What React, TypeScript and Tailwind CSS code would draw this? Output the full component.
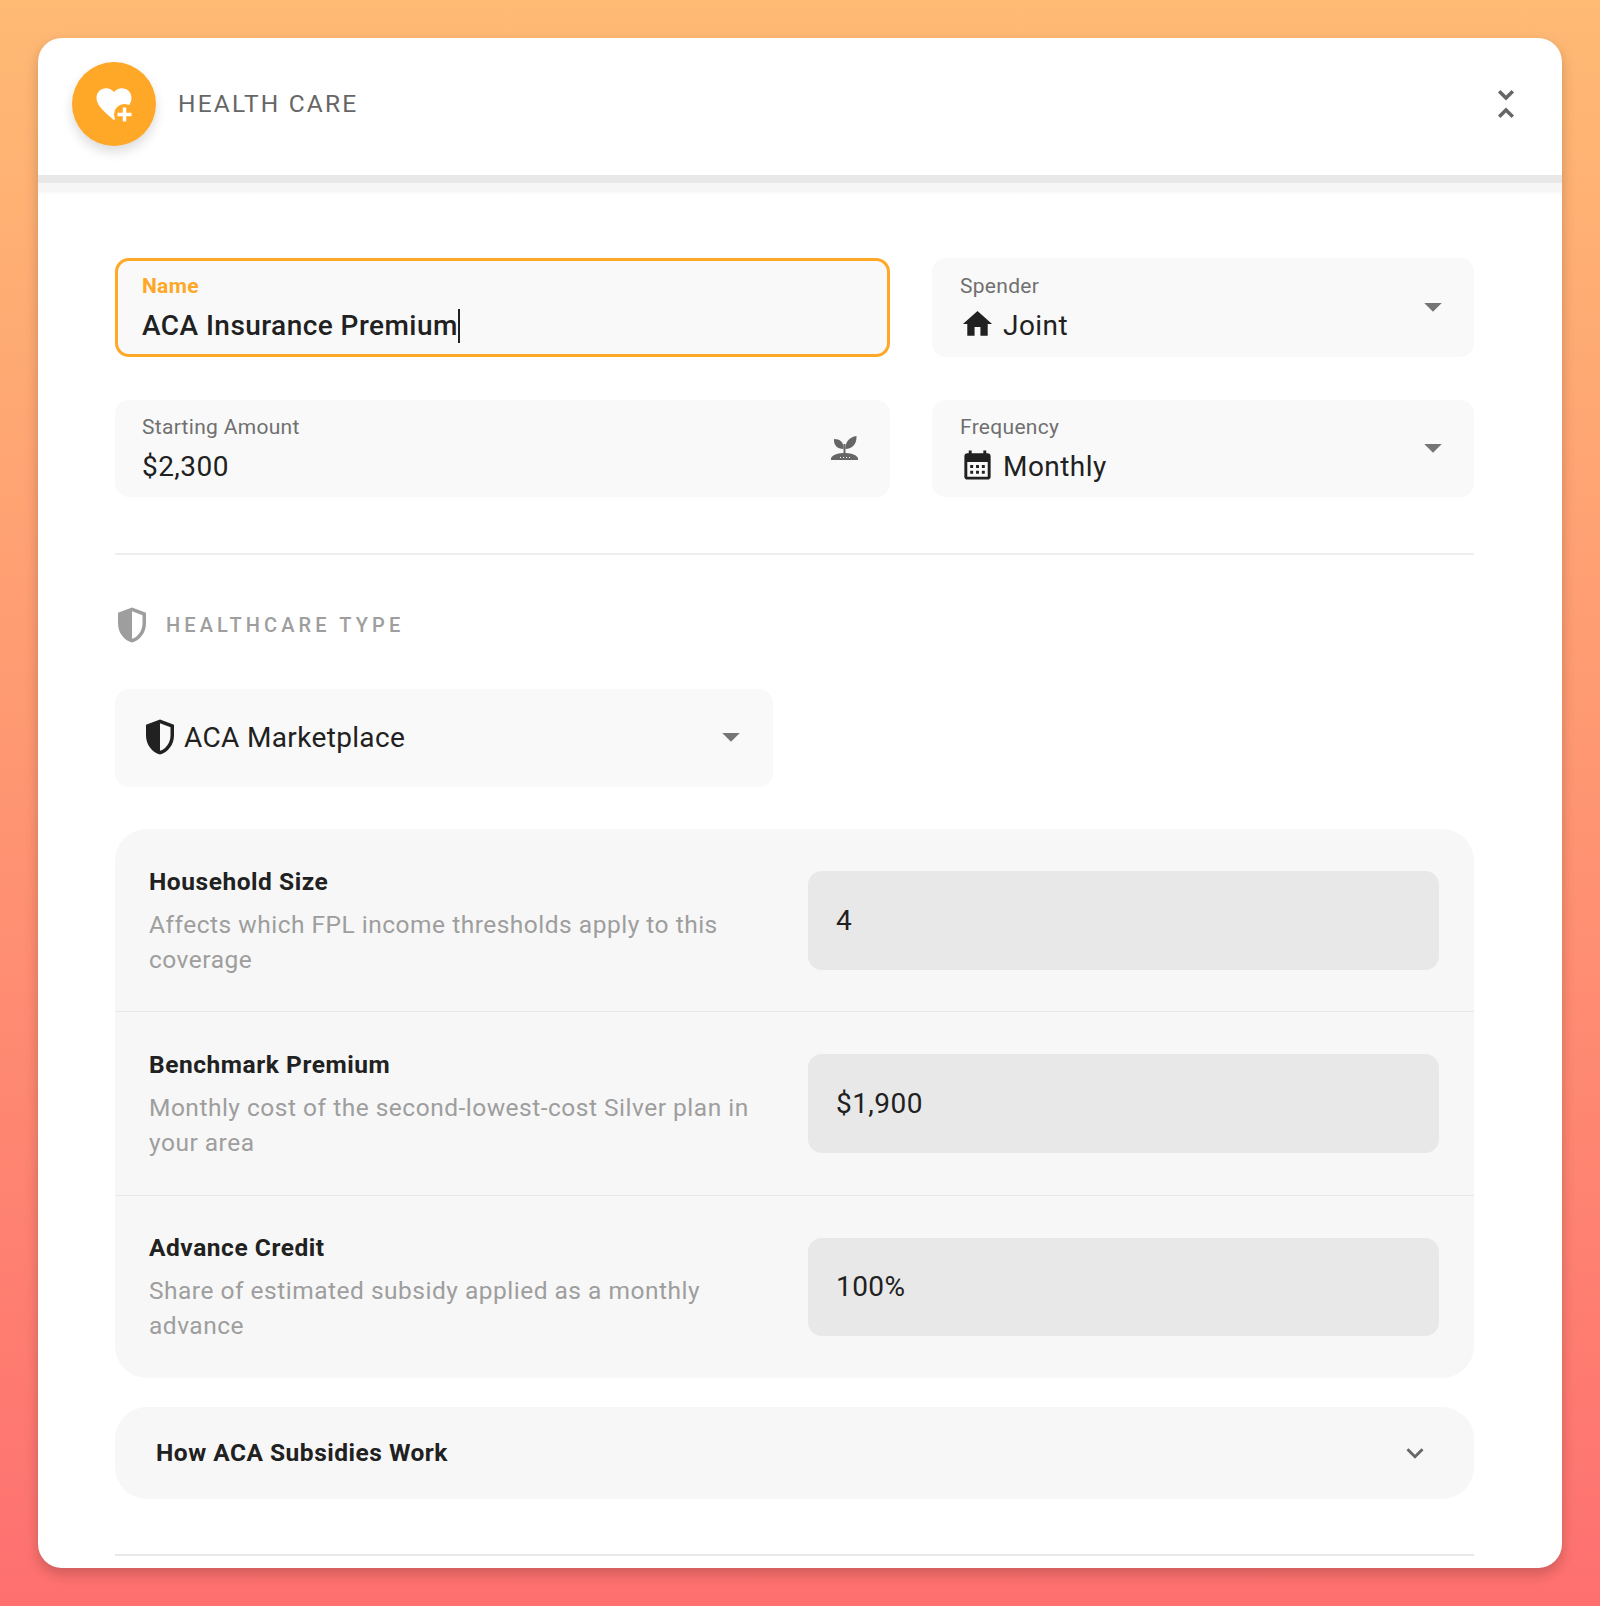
const caret = (
  <svg viewBox="0 0 24 24" className="w-[42px] h-[42px] fill-[#757575] shrink-0 -translate-y-[1.500px]">
    <path d="M7 10l5 5 5-5z" />
  </svg>
);

function HeartPlus() {
  return (
    <svg viewBox="0 0 24 24" className="w-[42px] h-[42px]">
      <path
        fill="#fff"
        d="M12 21.35l-1.45-1.32C5.4 15.36 2 12.28 2 8.5 2 5.42 4.42 3 7.5 3c1.74 0 3.41.81 4.5 2.09C13.09 3.81 14.76 3 16.5 3 19.58 3 22 5.42 22 8.5c0 3.78-3.4 6.86-8.55 11.54L12 21.35z"
      />
      <circle cx="18" cy="18" r="6" fill="#ffa726" />
      <path fill="#fff" d="M17 14h2v3h3v2h-3v3h-2v-3h-3v-2h3z" />
    </svg>
  );
}

function HalfShield({ className }: { className: string }) {
  return (
    <svg viewBox="0 0 24 24" className={className}>
      <path d="M12 2 4 5v6.09c0 5.05 3.41 9.76 8 10.91 4.59-1.15 8-5.86 8-10.91V5l-8-3zm6 9.09c0 4-2.55 7.7-6 8.83V4.14l6 2.25v4.7z" />
    </svg>
  );
}

function Sprout() {
  return (
    <svg viewBox="0 0 27 24" className="w-[27px] h-[24px] fill-[#666666] shrink-0">
      <path d="M0 22c2-4 9-5 13.500-5S25 18 27 22v2H0z" />
      <path d="M12.500 13C6 13 2.500 9 3 3c6 0 10 3 9.500 10z" />
      <path d="M14.500 13C21 13 26 8 25.500 0 18.500 1 14 6 14.500 13z" />
      <path d="M12.500 8h2v10h-2z" />
      <path fill="#f9f9f9" d="M9 21h1v1H9zm3 0h1v1h-1zm3 0h1v1h-1zm3 0h1v1h-1z" />
    </svg>
  );
}

function FilledField({
  label,
  value,
  icon,
  end,
  className,
}: {
  label: string;
  value: string;
  icon?: React.ReactNode;
  end?: React.ReactNode;
  className: string;
}) {
  return (
    <div className={`${className} rounded-[14px] bg-[#f9f9f9] flex items-center pr-[20px]`}>
      <div className="flex-1 pt-[1px]">
        <div className="text-[21px] leading-[28px] tracking-[0.3px] text-[#707070]">{label}</div>
        <div className="mt-[8px] flex items-center gap-[8px] text-[28px] leading-[36px] tracking-[0.45px] text-[#212121]">
          {icon}
          <span>{value}</span>
        </div>
      </div>
      {end}
    </div>
  );
}

function SettingRow({ title, desc, value, last }: { title: string; desc: string; value: string; last?: boolean }) {
  return (
    <div className={`grid grid-cols-2 gap-[28px] items-center pl-[34px] pr-[35px] py-[41.800px] ${last ? '' : 'border-b border-[#e8e8e8]'}`}>
      <div className="-my-[8px]">
        <div className="text-[24.500px] leading-[35px] font-bold tracking-[0.55px] text-[#212121]">{title}</div>
        <div className="mt-[8px] text-[24.500px] leading-[35px] text-[#9e9e9e] tracking-[0.5px]">{desc}</div>
      </div>
      <div className="h-[98.800px] rounded-[14px] bg-[#e8e8e8] flex items-center px-[28px] pt-[1px] text-[28px] tracking-[0.45px] text-[#212121]">
        {value}
      </div>
    </div>
  );
}

export default function App() {
  return (
    <div className="min-h-[1606px] p-[38px] bg-[linear-gradient(180deg,#ffba74_0%,#fe7070_100%)] font-[family-name:Roboto,sans-serif]">
      <div className="h-[1530px] overflow-hidden rounded-[24px] bg-white shadow-[0_6px_14px_rgba(0,0,0,0.2)]">
        {/* Header */}
        <header className="h-[137px] flex items-center justify-between pl-[34px] pr-[35px]">
          <div className="flex items-center gap-[22px]">
            <div className="w-[84px] h-[84px] -mt-[5px] rounded-full bg-[#ffa726] flex items-center justify-center shadow-[0_6px_12px_rgba(0,0,0,0.14)]">
              <HeartPlus />
            </div>
            <span className="-mt-[5px] text-[24.500px] tracking-[2.170px] text-[#666666]">HEALTH CARE</span>
          </div>
          <svg viewBox="0 0 24 24" className="w-[42px] h-[42px] -mt-[6px] fill-[#666666]">
            <path d="M7.410 18.590 8.830 20 12 16.830 15.170 20l1.410-1.410L12 14l-4.590 4.590zm9.180-13.180L15.170 4 12 7.170 8.830 4 7.410 5.410 12 10l4.590-4.590z" />
          </svg>
        </header>
        <div className="h-[20px] bg-[linear-gradient(180deg,#e8e8e8_0%,#e8e8e8_38%,#f6f6f6_42%,#f6f6f6_80%,#ffffff_100%)]" />

        <div className="pl-[77px] pr-[88px] pt-[63px]">
          {/* Base fields */}
          <div className="flex gap-[42px]">
            <div className="w-[775px] h-[99px] rounded-[14px] border-[3px] border-[#ffa726] bg-[#f9f9f9] pl-[24px] pt-[1px] flex flex-col justify-center">
              <div className="text-[21px] leading-[28px] font-bold tracking-[0.3px] text-[#ffa726]">Name</div>
              <div className="mt-[8px] flex items-center text-[28px] leading-[36px] font-medium tracking-[0.45px] text-[#212121]">
                <span>ACA Insurance Premium</span>
                <span className="w-[2px] h-[34px] bg-[#212121]" />
              </div>
            </div>
            <FilledField
              className="w-[542px] h-[99px] pl-[28px]"
              label="Spender"
              value="Joint"
              icon={
                <svg viewBox="0 0 24 24" className="w-[35px] h-[35px] fill-[#212121] -translate-y-[2.500px]">
                  <path d="M10 20v-6h4v6h5v-8h3L12 3 2 12h3v8z" />
                </svg>
              }
              end={caret}
            />
          </div>
          <div className="flex gap-[42px] mt-[43px]">
            <FilledField
              className="w-[775px] h-[97px] pl-[27px]"
              label="Starting Amount"
              value="$2,300"
              end={<div className="mr-[12px] -mt-[2px]"><Sprout /></div>}
            />
            <FilledField
              className="w-[542px] h-[97px] pl-[28px]"
              label="Frequency"
              value="Monthly"
              icon={
                <svg viewBox="0 0 24 24" className="w-[35px] h-[35px] fill-[#212121] -translate-y-[2.500px]">
                  <path d="M19 4h-1V2h-2v2H8V2H6v2H5c-1.100 0-2 .9-2 2v14c0 1.100.9 2 2 2h14c1.100 0 2-.9 2-2V6c0-1.100-.9-2-2-2zm0 16H5V10h14v10zM9 14H7v-2h2v2zm4 0h-2v-2h2v2zm4 0h-2v-2h2v2zm-8 4H7v-2h2v2zm4 0h-2v-2h2v2zm4 0h-2v-2h2v2z" />
                </svg>
              }
              end={caret}
            />
          </div>

          <div className="h-[2px] mt-[56px] bg-[#eeeeee]" />

          {/* Healthcare type */}
          <div className="flex items-center gap-[13px] h-[42px] mt-[49px] -ml-[4px]">
            <HalfShield className="w-[42px] h-[42px] fill-[#9e9e9e]" />
            <span className="text-[20px] font-medium tracking-[4.100px] text-[#9e9e9e]">HEALTHCARE TYPE</span>
          </div>

          <div className="w-[658px] h-[98px] mt-[43px] rounded-[14px] bg-[#f9f9f9] flex items-center pl-[24px] pr-[21px]">
            <HalfShield className="w-[42px] h-[42px] fill-[#212121] -mr-[3px] -translate-y-[1px]" />
            <span className="flex-1 ml-[6px] text-[28px] tracking-[0.35px] text-[#212121]">ACA Marketplace</span>
            {caret}
          </div>

          <div className="mt-[42px] rounded-[32px] bg-[#f7f7f7]">
            <SettingRow
              title="Household Size"
              desc="Affects which FPL income thresholds apply to this coverage"
              value="4"
            />
            <SettingRow
              title="Benchmark Premium"
              desc="Monthly cost of the second-lowest-cost Silver plan in your area"
              value="$1,900"
            />
            <SettingRow
              title="Advance Credit"
              desc="Share of estimated subsidy applied as a monthly advance"
              value="100%"
              last
            />
          </div>

          <div className="h-[92px] mt-[29px] rounded-[32px] bg-[#f7f7f7] flex items-center justify-between pl-[41px] pr-[42px]">
            <span className="text-[24.500px] font-bold tracking-[0.5px] text-[#212121]">How ACA Subsidies Work</span>
            <svg viewBox="0 0 24 24" className="w-[34px] h-[34px] fill-[#666666]">
              <path d="M16.590 8.590 12 13.170 7.410 8.590 6 10l6 6 6-6z" />
            </svg>
          </div>

          <div className="h-[2px] mt-[55px] bg-[#e8e8e8]" />
        </div>
      </div>
    </div>
  );
}
